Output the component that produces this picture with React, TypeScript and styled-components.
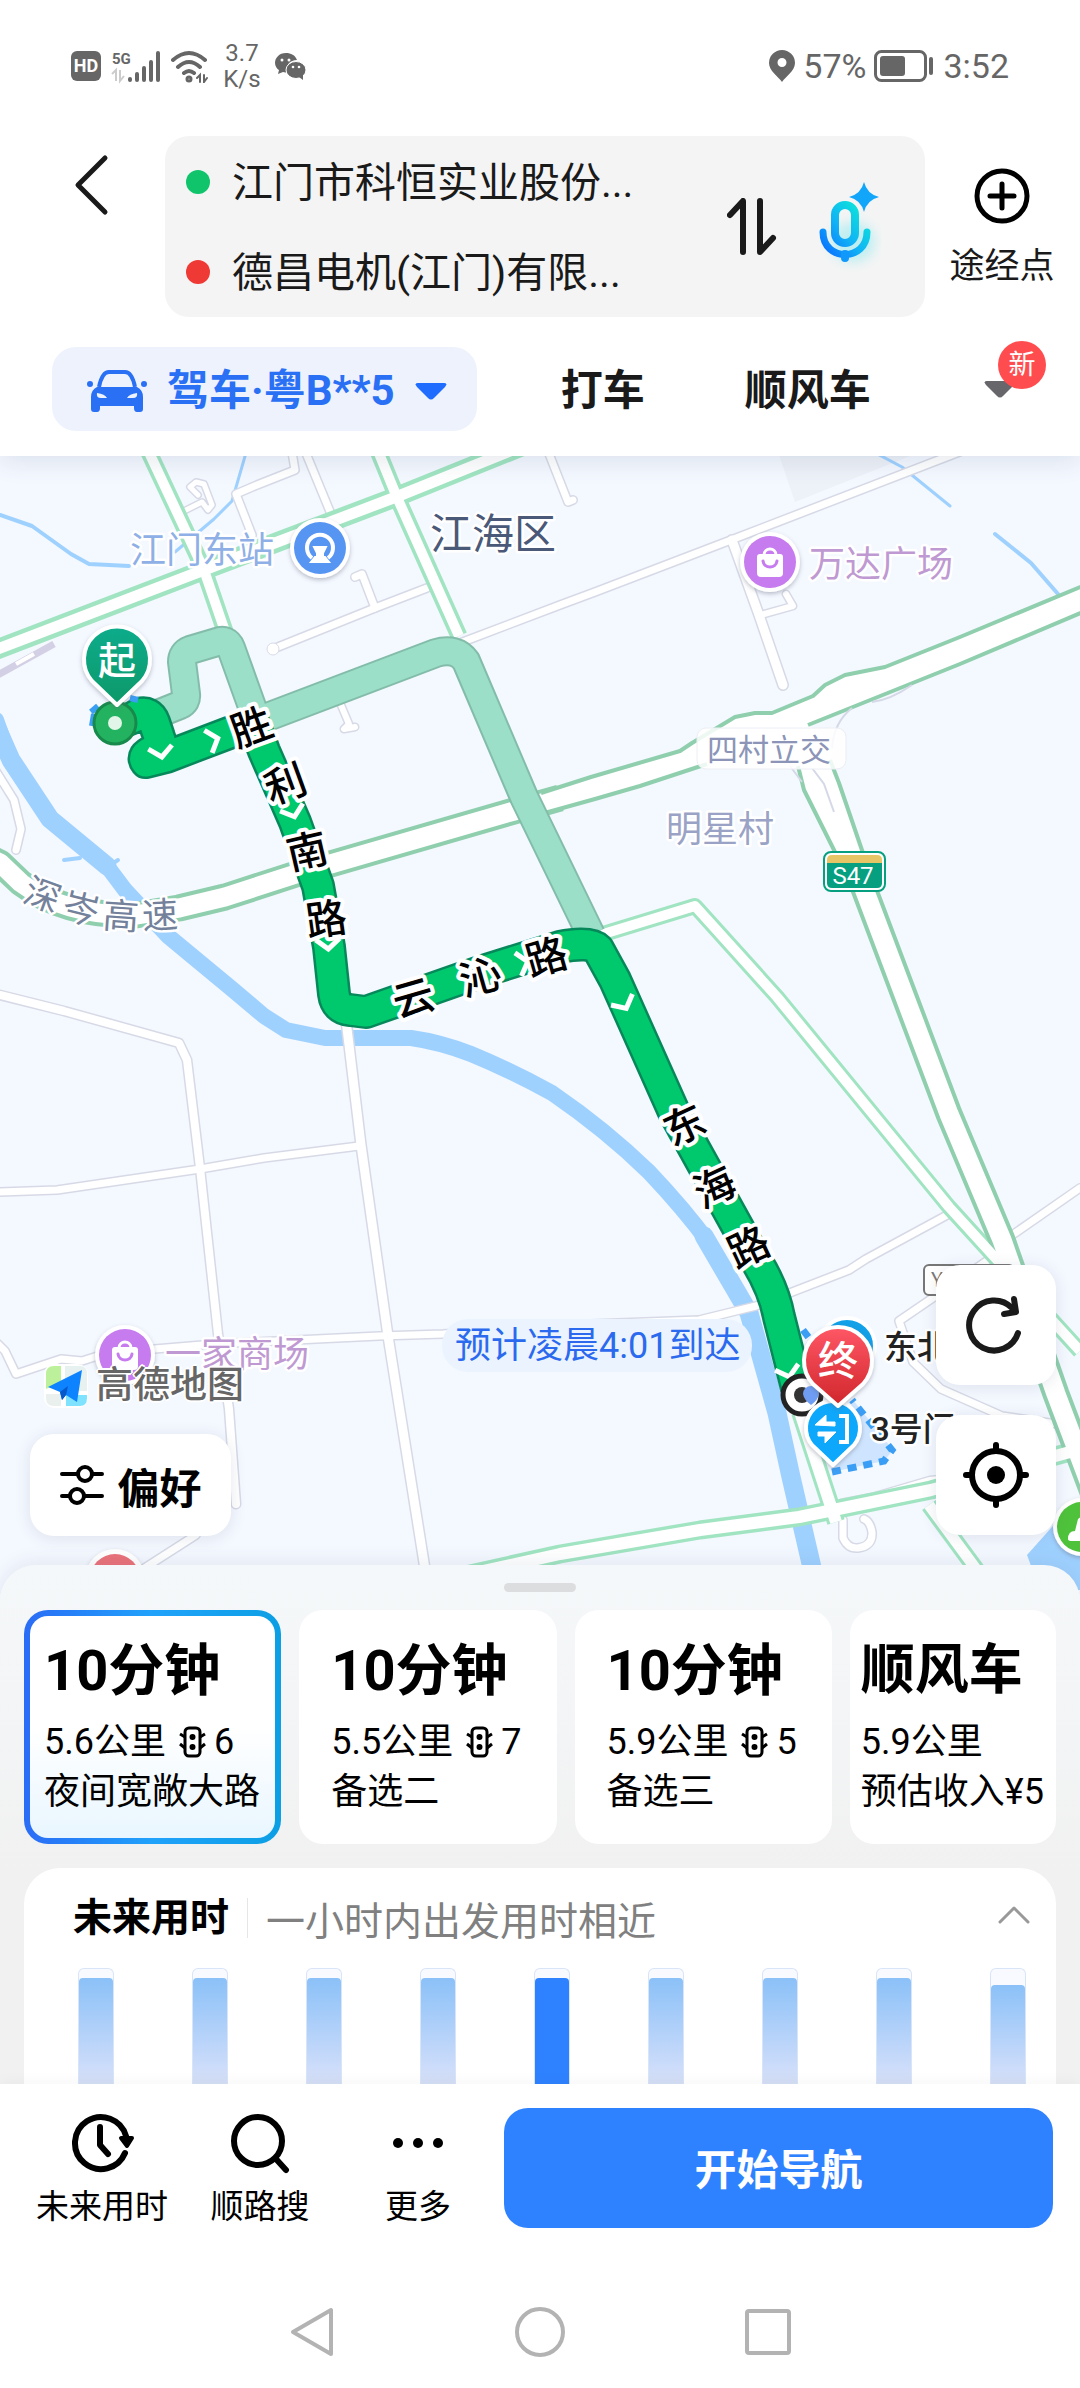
import React from "react";
import styled, { createGlobalStyle, css } from "styled-components";

const Global = createGlobalStyle`
  *, *::before, *::after { box-sizing: border-box; }
  body { margin: 0; background: #fff; }
  body, button {
    font-family: Roboto, "Noto Sans CJK SC", sans-serif;
    color: #1a1a1a;
  }
  button { border: 0; padding: 0; background: none; cursor: pointer; text-align: left; }
  svg { display: block; flex: none; }
`;

const Page = styled.div`
  min-height: 100vh;
  display: flex;
  flex-direction: column;
`;

const Header = styled.header`
  position: relative;
  z-index: 2;
  display: flex;
  flex-direction: column;
  background: #fff;
  box-shadow: 0 4px 24px rgba(60, 80, 110, 0.14);
  padding-bottom: 25px;
`;

/* ---------- status bar ---------- */

const StatusBar = styled.div`
  display: flex;
  align-items: center;
  justify-content: space-between;
  height: 132px;
  padding: 0 71px;
  color: #666;
`;

const StatusGroup = styled.div<{ $gap: number }>`
  display: flex;
  align-items: center;
  gap: ${(p) => p.$gap}px;
  font-size: 34px;
  line-height: 40px;
`;

const HdBadge = styled.span`
  width: 30px;
  border-radius: 6px;
  background: #666;
  color: #fff;
  font-size: 18px;
  line-height: 30px;
  font-weight: 700;
  text-align: center;
`;

const NetSpeed = styled.span`
  width: 46px;
  font-size: 24px;
  line-height: 26px;
  text-align: center;
`;

/* ---------- route header ---------- */

const SearchRow = styled.div`
  display: flex;
  align-items: flex-start;
  gap: 16px;
  padding: 4px 20px 0 62px;
`;

const BackButton = styled.button`
  width: 87px;
  padding: 18px 0 0 11px;
`;

const RouteBox = styled.div`
  flex: 1;
  display: flex;
  align-items: center;
  justify-content: space-between;
  min-width: 0;
  padding: 1px 44px 0 21px;
  border-radius: 24px;
  background: #f4f4f4;
`;

const RouteFields = styled.div`
  display: flex;
  flex-direction: column;
`;

const RouteField = styled.button`
  display: flex;
  align-items: center;
  gap: 22px;
  height: 90px;
  white-space: nowrap;
`;

const RouteName = styled.span`
  padding-top: 2px;
  font-size: 41px;
  line-height: 60px;
`;

const Dot = styled.span<{ $color: string }>`
  width: 24px;
  height: 24px;
  border-radius: 50%;
  background: ${(p) => p.$color};
`;

const RouteTools = styled.div`
  display: flex;
  align-items: center;
  gap: 40px;
`;

const ViaButton = styled.button`
  display: flex;
  flex-direction: column;
  align-items: center;
  gap: 16px;
  width: 116px;
  margin-left: 3px;
  padding-top: 32px;
  font-size: 35px;
  line-height: 54px;
`;

const ModeRow = styled.nav`
  display: flex;
  align-items: center;
  height: 84px;
  margin-top: 30px;
  padding: 0 52px;
`;

const ModeButton = styled.button<{ $active?: boolean }>`
  display: flex;
  align-items: center;
  gap: 20px;
  padding-top: 4px;
  font-size: 42px;
  line-height: 80px;
  font-weight: 700;
  white-space: nowrap;
  ${(p) =>
    p.$active &&
    css`
      padding-right: 30px;
      padding-left: 35px;
      border-radius: 24px;
      background: #edf2fd;
      color: #2a70f4;
    `}
`;

const ModeGroup = styled.div`
  flex: 1;
  display: flex;
  justify-content: space-between;
  align-items: center;
  padding-left: 84px;
`;

const Modes = styled.div`
  display: flex;
  gap: 100px;
`;

const MoreModes = styled.button`
  position: relative;
  width: 44px;
  height: 60px;
  display: flex;
  align-items: center;
`;

const NewBadge = styled.span`
  position: absolute;
  left: 14px;
  top: -18px;
  width: 48px;
  height: 48px;
  border-radius: 50%;
  background: #ff4d4f;
  color: #fff;
  font-size: 27px;
  line-height: 48px;
  text-align: center;
`;

/* ---------- map ---------- */

const MapArea = styled.main`
  position: relative;
  flex: 1;
  min-height: 700px;
  overflow: hidden;
  background: #f4f8ff;
`;

const MapCanvas = styled.svg`
  position: absolute;
  inset: 0;
  width: 100%;
  height: 100%;
  font-family: Roboto, "Noto Sans CJK SC", sans-serif;
`;

const floating = css`
  display: flex;
  align-items: center;
  justify-content: center;
  border-radius: 24px;
  background: #fff;
  box-shadow: 0 2px 16px rgba(60, 80, 110, 0.13);
`;

const MapControls = styled.div`
  position: absolute;
  right: 24px;
  bottom: 66px;
  display: flex;
  flex-direction: column;
  gap: 30px;
`;

const MapButton = styled.button`
  ${floating}
  width: 120px;
  height: 120px;
`;

const PreferButton = styled.button`
  ${floating}
  position: absolute;
  left: 30px;
  bottom: 65px;
  gap: 12px;
  width: 201px;
  height: 102px;
  font-size: 42px;
  font-weight: 700;
  color: #000;
`;

const Attribution = styled.div`
  position: absolute;
  left: 44px;
  bottom: 188px;
  display: flex;
  align-items: center;
  gap: 8px;
  color: #666;
  font-size: 37px;
  line-height: 54px;
  font-weight: 500;
  text-shadow: 2px 0 #fff, -2px 0 #fff, 0 2px #fff, 0 -2px #fff, 1px 1px #fff, -1px -1px #fff;
`;

/* ---------- bottom sheet ---------- */

const Sheet = styled.section`
  position: relative;
  z-index: 1;
  margin-top: -36px;
  padding: 18px 24px 0;
  border-radius: 36px 36px 0 0;
  background: linear-gradient(#f5f8fa, #f1f1f1 60%);
  box-shadow: 0 -2px 20px rgba(60, 80, 110, 0.1);
`;

const Handle = styled.div`
  width: 72px;
  height: 9px;
  margin: 0 auto 18px;
  border-radius: 5px;
  background: #dcdddf;
`;

const RouteCards = styled.div`
  display: grid;
  grid-template-columns: 257fr 257fr 257fr 206fr;
  gap: 18px;
`;

const RouteCard = styled.button<{ $selected?: boolean; $inset: number }>`
  display: flex;
  flex-direction: column;
  min-width: 0;
  height: 234px;
  padding: 9px 0 0 ${(p) => p.$inset}px;
  border: 6px solid transparent;
  border-radius: 24px;
  background: ${(p) =>
    p.$selected
      ? "linear-gradient(#fff 50%, #e9f6ff) padding-box, linear-gradient(90deg, #2a6cf6, #20a2fb 50%, #0c9fe4) border-box"
      : "#fff"};
  color: #000;
  white-space: nowrap;
`;

const CardTitle = styled.div<{ $small: boolean }>`
  font-size: ${(p) => (p.$small ? 54 : 56)}px;
  line-height: 92px;
  font-weight: 700;
`;

const CardLine = styled.div`
  display: flex;
  align-items: center;
  font-size: 36px;
  line-height: 50px;
`;

const Lights = styled.span`
  display: flex;
  align-items: center;
  gap: 8px;
  margin-left: 13px;
`;

const FutureCard = styled.section`
  height: 216px;
  margin-top: 24px;
  border-radius: 36px 36px 0 0;
  background: #fff;
  overflow: hidden;
`;

const FutureHead = styled.div`
  display: flex;
  align-items: center;
  height: 100px;
  padding: 0 26px 0 49px;
  font-size: 39px;
`;

const FutureTitle = styled.h2`
  margin: 0;
  padding-right: 18px;
  border-right: 1px solid #e6e6e6;
  font-size: 39px;
  line-height: 40px;
  font-weight: 700;
  color: #000;
`;

const FutureNote = styled.span`
  flex: 1;
  padding-left: 18px;
  color: #808080;
`;

const Bars = styled.div`
  display: flex;
  justify-content: space-between;
  height: 116px;
  padding: 0 30px 0 54px;
`;

const BarTrack = styled.div`
  display: flex;
  align-items: flex-end;
  width: 36px;
  border: solid #d8e4f8;
  border-width: 1px 1px 0;
  border-radius: 6px 6px 0 0;
  background: #f8faff;
`;

const BarFill = styled.div<{ $active: boolean }>`
  width: 100%;
  border-radius: 4px 4px 0 0;
  background: ${(p) => (p.$active ? "#2f82ff" : "linear-gradient(#8bc1f8, #cddcfa 85%, #d5dff5)")};
`;

/* ---------- footer ---------- */

const Footer = styled.footer`
  position: relative;
  z-index: 2;
  background: #fff;
  box-shadow: 0 -2px 14px rgba(0, 0, 0, 0.04);
`;

const ActionRow = styled.div`
  display: flex;
  align-items: center;
  padding: 24px 27px 0 23px;
`;

const ActionButton = styled.button`
  display: flex;
  flex-direction: column;
  align-items: center;
  gap: 8px;
  width: 158px;
  height: 120px;
  padding-top: 5px;
  font-size: 33px;
  line-height: 48px;
  color: #000;
`;

const StartButton = styled.button`
  flex: 1;
  height: 120px;
  margin-left: 7px;
  padding-bottom: 4px;
  border-radius: 24px;
  background: #2f82ff;
  color: #fff;
  font-size: 42px;
  font-weight: 700;
  text-align: center;
`;

const SystemNav = styled.nav`
  display: flex;
  justify-content: center;
  align-items: center;
  gap: 172px;
  height: 160px;
  padding: 48px 0 0;
`;

const SystemButton = styled.button`
  display: flex;
  justify-content: center;
  width: 56px;
`;

/* ---------- data ---------- */

const routes = [
  { title: "10分钟", distance: "5.6公里", lights: 6, note: "夜间宽敞大路", inset: 14 },
  { title: "10分钟", distance: "5.5公里", lights: 7, note: "备选二", inset: 26 },
  { title: "10分钟", distance: "5.9公里", lights: 5, note: "备选三", inset: 26 },
  { title: "顺风车", distance: "5.9公里", lights: 0, note: "预估收入¥5", inset: 5 },
];

const durations = [106, 106, 106, 106, 106, 106, 106, 106, 99];
const currentSlot = 4;

const localRoads: [string, number][] = [
  ["M291 446L295 470L257 485L236 494L252 535", 9],
  ["M303 446L331 514", 9],
  ["M184 511L202 502L208 510L212 505L204 484L196 482L190 487L198 495", 7],
  ["M427 588L375 608L273 649", 9],
  ["M375 608L362 574L355 577", 9],
  ["M460 643L560 605L595 592L731 540L949 456L980 444", 9],
  ["M546 446L568 502L573 500", 9],
  ["M732 540L759 615L783 685", 11],
  ["M761 615L793 606L786 594", 8],
  ["M338 698L349 724L344 729L355 727", 8],
  ["M-6 768L14 800L21 829L16 850", 9],
  ["M0 995L64 1011L179 1043L187 1060L200 1168L218 1334L229 1409L236 1504", 10],
  ["M0 1192L57 1190L200 1169L264 1158L359 1146", 9],
  ["M346 1020L361 1145L388 1336L425 1569L432 1610", 11],
  ["M-4 1342L5 1351L16 1374L61 1359L82 1361L107 1353L214 1344L379 1336L443 1334L591 1324L699 1320L756 1306L849 1270L866 1259L949 1214", 9],
  ["M995 1247L1080 1188", 9],
  ["M1000 1252L899 1321L913 1362L941 1389L1002 1416L1070 1426", 9],
  ["M196 1535L143 1569", 9],
  ["M843 1520V1538Q848 1549 858 1548Q873 1546 872 1532Q870 1521 864 1519", 9],
  ["M841 1503L872 1497L930 1480L950 1478", 8],
];

const greenRoads: [string, number, number][] = [
  ["M-10 652L204 570L396 497L530 443", 20, 11],
  ["M146 446L204 570L228 640", 17, 10],
  ["M376 446L396 495L459 636", 17, 10],
  ["M600 935L695 906L777 997L949 1207L1080 1351", 16, 10],
  ["M800 1412L836 1522", 18, 12],
  ["M380 1593L443 1580L560 1554L700 1530L799 1517L931 1490L1070 1452", 19, 12],
  ["M929 1505L976 1569L1006 1612", 17, 11],
];

const expressways = [
  "M-10 858L0 863L21 883Q65 916 136 915L179 908L225 897L296 874L514 811L560 798",
  "M854 858L863 886L906 1000L949 1114L1002 1240L1056 1394L1096 1500",
];

const roadNames: [string, number, number, number][] = [
  ["胜", 251, 726, -20], ["利", 285, 783, -20], ["南", 307, 850, -13], ["路", 326, 918, -8],
  ["云", 413, 997, -16], ["沁", 480, 976, -16], ["路", 546, 956, -16],
  ["东", 684, 1124, -25], ["海", 714, 1186, -25], ["路", 748, 1246, -25],
];

const expresswayName: [string, number, number, number][] = [
  ["深", 43, 894, 20], ["岑", 81, 908, 14], ["高", 121, 915, 4], ["速", 160, 914, -3],
];

const mapLabels: [string, number, number, number, string, number][] = [
  ["江门东站", 130, 563, 36, "#8fb0e6", 400],
  ["江海区", 430, 549, 42, "#4b5979", 400],
  ["万达广场", 809, 577, 36, "#bf9ad2", 400],
  ["明星村", 666, 842, 36, "#9aa3c6", 400],
  ["一家商场", 165, 1367, 36, "#bf9ad2", 400],
  ["东北门", 884, 1359, 33, "#222", 500],
  ["3号门", 871, 1441, 33, "#222", 500],
];

const chevrons: [number, number, number][] = [
  [213, 740, -19], [161, 752, 80], [293, 812, 72], [328, 944, 86], [523, 963, -16], [624, 1004, 63], [788, 1372, 75],
];

/* ---------- map drawing ---------- */

function RotatedGlyphs({ items, size, fill, halo, weight }: {
  items: [string, number, number, number][]; size: number; fill: string; halo: number; weight: number;
}) {
  return (
    <g fontSize={size} fill={fill} stroke="#fff" strokeWidth={halo} strokeLinejoin="round" paintOrder="stroke" textAnchor="middle" fontWeight={weight}>
      {items.map(([ch, x, y, r]) => (
        <text key={`${ch}${x}`} transform={`translate(${x} ${y}) rotate(${r})`} y={Math.round(size * 0.38)}>{ch}</text>
      ))}
    </g>
  );
}

function MallMarker({ x, y }: { x: number; y: number }) {
  return (
    <g transform={`translate(${x} ${y})`}>
      <circle r="30" fill="#fff" filter="url(#soft)" />
      <circle r="26" fill="#c67bee" />
      <path d="M-13 -5Q-13 -8 -10 -8H10Q13 -8 13 -5V11Q13 15 9 15H-9Q-13 15 -13 11Z" fill="#fff" />
      <path d="M-6 -7C-6 -15 6 -15 6 -7" fill="none" stroke="#fff" strokeWidth="3" />
      <path d="M-7 -1C-6 7 6 7 7 -1" fill="none" stroke="#c67bee" strokeWidth="3" strokeLinecap="round" />
    </g>
  );
}

function RouteMap() {
  const main =
    "M114 722Q128 722 139 714Q150 711 154 722L159 737Q164 748 153 751Q141 756 146 762L166 757L229 733L254 724L264 751L295 822L318 886L329 947L334 994Q336 1009 350 1010L366 1012L480 972L560 947Q590 941 598 949L615 980L674 1112L757 1262Q774 1290 779 1317L797 1388";
  const alt =
    "M150 717L180 705Q187 702 186 694L182 662Q182 653 190 650L217 642Q227 638 231 648L255 715M262 719L436 653Q456 647 466 661L524 797L591 935";
  return (
    <MapCanvas viewBox="0 456 1080 1145" preserveAspectRatio="xMidYMid slice" role="img" aria-label="路线地图">
      <defs>
        <filter id="soft" x="-30%" y="-30%" width="160%" height="160%">
          <feDropShadow dx="0" dy="2" stdDeviation="2" floodColor="#5b6478" floodOpacity="0.4" />
        </filter>
        <linearGradient id="startFill" x1="0" y1="0" x2="0" y2="1">
          <stop offset="0" stopColor="#0aac8c" /><stop offset="1" stopColor="#079868" />
        </linearGradient>
        <linearGradient id="endFill" x1="0" y1="0" x2="0" y2="1">
          <stop offset="0" stopColor="#ff5766" /><stop offset="1" stopColor="#d0262b" />
        </linearGradient>
      </defs>
      <path d="M776 446L795 502L935 446Z" fill="#edf1f8" />

      <g fill="none" stroke="#9fd1ff" strokeLinejoin="round" strokeLinecap="round">
        <path d="M-4 720L11 762L50 819L107 866L125 890L168 936L232 989L264 1016L286 1030L325 1038L411 1038Q440 1042 471 1054Q510 1070 552 1093Q606 1130 649 1172Q685 1210 709 1243L749 1313" strokeWidth="16" />
        <path d="M-4 726L11 760L50 819L107 866" strokeWidth="19" />
        <path d="M704 1236L749 1313L777 1413L791 1477L813 1572L820 1610" strokeWidth="19" />
        <path d="M64 860L80 858M112 864L118 860" strokeWidth="4" />
        <path d="M0 515L32 526L71 554L89 564L129 566" strokeWidth="4" />
        <path d="M248 446L232 501L214 519L175 552" strokeWidth="3" />
        <path d="M870 450L902 467L950 506" strokeWidth="3" />
        <path d="M995 534L1031 563L1058 594" strokeWidth="4" />
      </g>
      <path d="M1027 1555L1060 1518L1090 1530V1590H1040Z" fill="#9fd1ff" />

      <path d="M-4 676L54 644" stroke="#d3cfe4" strokeWidth="7" />
      <path d="M16 664L34 654" stroke="#fff" strokeWidth="4" />

      <g fill="none" strokeLinejoin="round" strokeLinecap="round">
        {localRoads.map(([d, w]) => <path key={d} d={d} stroke="#d7dae6" strokeWidth={w + 1} />)}
        {localRoads.map(([d, w]) => <path key={d} d={d} stroke="#fff" strokeWidth={w - 2} />)}
      </g>
      <circle cx="273" cy="649" r="6" fill="#fff" stroke="#d9dce8" />
      <g fill="none" strokeLinejoin="round">
        {greenRoads.map(([d, w]) => <path key={d} d={d} stroke="#a0e4c1" strokeWidth={w} />)}
        {expressways.map((d) => <path key={d} d={d} stroke="#8fcfae" strokeWidth="27" />)}
        {greenRoads.map(([d, , w]) => <path key={d} d={d} stroke="#fff" strokeWidth={w} />)}
        {expressways.map((d) => <path key={d} d={d} stroke="#fff" strokeWidth="19" />)}
      </g>
      <path d="M541 793L591 777L680 751L692 743L735 717L755 713L772 713L813 696L825 685L845 675L885 667L960 637L1090 583V610L960 666L808 725Q838 742 830 760L839 783L862 860L840 864L804 791L798 765L785 740L707 764L640 786L595 798L541 812Z" fill="#fff" />
      <g fill="none" stroke="#8fcfae" strokeWidth="4" strokeLinejoin="round">
        <path d="M541 793L591 777L680 751L692 743L735 717L755 713L772 713L813 696L825 685L845 675L885 667L960 637L1090 583" />
        <path d="M1090 609L960 664L808 725M541 814L595 799L640 786L707 764" />
        <path d="M798 766L804 790L842 866M830 760L839 783L864 856" />
      </g>
      <path d="M852 708Q834 722 832 748M912 685Q890 700 872 702M812 768L824 784L834 812M790 766L802 782" fill="none" stroke="#d5d8e6" strokeWidth="2" />

      <g fill="none" strokeLinejoin="round">
        <path d={alt} stroke="#83bda9" strokeWidth="30" />
        <path d={alt} stroke="#9bdfc8" strokeWidth="26" />
        <path d={main} stroke="#06885a" strokeWidth="34" />
        <path d={main} stroke="#00c96d" strokeWidth="29" />
      </g>
      <g fill="none" stroke="#fff" strokeWidth="5">
        {chevrons.map(([x, y, r]) => (
          <path key={x} d="M-5 -12L5 0L-5 12" transform={`translate(${x} ${y}) rotate(${r})`} />
        ))}
      </g>

      <rect x="697" y="728" width="149" height="41" rx="9" fill="#fff" fillOpacity="0.85" stroke="#eceef4" />
      <text x="707" y="761" fontSize="31" fill="#8c95b8">四村立交</text>

      <path d="M832 1472L884 1461L893 1450L853 1400Z" fill="#cfe5ff" />
      <path d="M832 1472L884 1461L892 1450L852 1400M803 1330L812 1342" fill="none" stroke="#3b9ef5" strokeWidth="7" strokeDasharray="9 7" />
      <path d="M91 712L98 706M92 726L94 714M130 698L138 700" stroke="#3b9ef5" strokeWidth="6" />

      <MallMarker x={125} y={1355} />
      {mapLabels.map(([text, x, y, size, fill, weight]) => (
        <text key={text} x={x} y={y} fontSize={size} fill={fill} fontWeight={weight}
          stroke="#fff" strokeWidth="5" strokeLinejoin="round" paintOrder="stroke">{text}</text>
      ))}
      <RotatedGlyphs items={expresswayName} size={36} fill="#74819b" halo={5} weight={400} />
      <RotatedGlyphs items={roadNames} size={41} fill="#000" halo={8} weight={500} />

      <g transform="translate(320 548)">
        <circle r="30" fill="#fff" filter="url(#soft)" />
        <circle r="26" fill="#5795f3" />
        <path d="M-8 10A13 13 0 1 1 8 10" fill="none" stroke="#fff" strokeWidth="4" />
        <path d="M-2 -14H2M-6 -1H6L3 5V9H-3V5ZM-9 14H9L5 9H-5Z" fill="#fff" stroke="#fff" strokeWidth="2" />
      </g>
      <MallMarker x={770} y={562} />

      <g>
        <rect x="824" y="852" width="61" height="39" rx="7" fill="#fff" stroke="#06a080" strokeWidth="2" />
        <path d="M827 863V860Q827 855 832 855H877Q882 855 882 860V863Z" fill="#e5c565" />
        <path d="M827 863H882V883Q882 888 877 888H832Q827 888 827 883Z" fill="#06a080" />
        <text x="853" y="884" fontSize="24" fill="#fff" textAnchor="middle">S47</text>
      </g>
      <g>
        <rect x="924" y="1265" width="90" height="30" rx="5" fill="#fff" stroke="#777" strokeWidth="2" />
        <text x="931" y="1287" fontSize="20" fill="#777">Y</text>
      </g>

      <rect x="442" y="1319" width="310" height="53" rx="26" fill="#ebf4fe" />
      <text x="455" y="1358" fontSize="36" fill="#2b6aee">预计凌晨4:01到达</text>

      <circle cx="802" cy="1395" r="19" fill="#fff" stroke="#222" strokeWidth="5" />
      <circle cx="802" cy="1395" r="8" fill="#333" />
      <path d="M803 1394A8 8 0 1 1 819 1394Q818 1400 811 1405Q804 1400 803 1394Z" fill="#6f9df3" />

      <circle cx="847" cy="1346" r="28" fill="#12a0e8" stroke="#fff" strokeWidth="4" />
      <path d="M833 1465L812 1445A27 27 0 1 1 854 1445Z" fill="#08a7fb" stroke="#fff" strokeWidth="4" strokeLinejoin="round" filter="url(#soft)" />
      <path d="M815 1425L826 1415V1422H835V1426ZM836 1432H818V1436H825V1443Z" fill="#fff" stroke="#fff" strokeWidth="1" />
      <path d="M839 1416H847V1442H839" fill="none" stroke="#fff" strokeWidth="4" />
      <path d="M838 1406L813 1384A34 34 0 1 1 863 1384Z" fill="url(#endFill)" stroke="#fff" strokeWidth="4" strokeLinejoin="round" filter="url(#soft)" />
      <text x="838" y="1375" fontSize="40" fill="#fff" textAnchor="middle" fontWeight="500">终</text>

      <circle cx="115" cy="723" r="21" fill="#23b25f" stroke="#178a4b" strokeWidth="3" />
      <circle cx="115" cy="723" r="7" fill="#e1f6e8" />
      <path d="M117 705L92 681A33 33 0 1 1 142 681Z" fill="url(#startFill)" stroke="#fff" strokeWidth="4" strokeLinejoin="round" filter="url(#soft)" />
      <text x="117" y="674" fontSize="38" fill="#fff" textAnchor="middle" fontWeight="500">起</text>

      <g transform="translate(1082 1527)">
        <circle r="29" fill="#fff" filter="url(#soft)" />
        <circle r="25" fill="#4fc23b" />
        <path d="M-14 12Q-14 4 -7 4L-4 -8L4 -14V14H-10Q-14 14 -14 12Z" fill="#fff" />
      </g>
      <circle cx="115" cy="1579" r="30" fill="#fff" filter="url(#soft)" />
      <circle cx="115" cy="1579" r="25" fill="#ea727a" />
    </MapCanvas>
  );
}

/* ---------- icons ---------- */

const TrafficLight = () => (
  <svg width="27" height="32" viewBox="0 0 27 32" fill="none" stroke="#000" strokeWidth="3">
    <rect x="6" y="2" width="15" height="28" rx="4" />
    <path d="M1 8L6 11M26 8L21 11M1 18L6 22M26 18L21 22" />
    <circle cx="13.5" cy="11" r="1.5" /><circle cx="13.5" cy="21" r="1.5" />
  </svg>
);

const Caret = ({ color }: { color: string }) => (
  <svg width="32" height="18" viewBox="0 0 32 18">
    <path d="M3 1H29Q33 1 30 5L19 16Q16 19 13 16L2 5Q-1 1 3 1Z" fill={color} />
  </svg>
);

export default function App() {
  return (
    <Page>
      <Global />
      <Header>
        <StatusBar>
          <StatusGroup $gap={10}>
            <HdBadge>HD</HdBadge>
            <svg width="50" height="38" viewBox="0 0 50 38">
              <text x="1" y="17" fontSize="15" fontWeight="700" fill="#666" fontFamily="Roboto, sans-serif">5G</text>
              <path d="M1 27L5 23V34M9 23V34L13 29" stroke="#ccc" strokeWidth="2" fill="none" />
              <path d="M19 32V33M26 27V33M33 21V33M40 15V33M47 6V33" stroke="#666" strokeWidth="4" strokeLinecap="round" />
            </svg>
            <svg width="38" height="34" viewBox="0 0 38 34" fill="none" stroke="#666" strokeWidth="4" strokeLinecap="round">
              <path d="M2 11Q18 -3 34 11M7 18Q18 8 29 18M13 24Q18 20 23 24" />
              <circle cx="18" cy="30" r="1.5" />
              <path d="M26 29L29 26V33M33 26V33L36 29" strokeWidth="2" />
            </svg>
            <NetSpeed>3.7 K/s</NetSpeed>
            <svg width="31" height="27" viewBox="0 0 31 27">
              <path d="M11 0C4 0 0 5 0 10C0 13 2 16 4 17L3 21L8 19L13 20C10 12 15 7 22 7C20 2 16 0 11 0Z" fill="#666" />
              <ellipse cx="21" cy="17" rx="10" ry="8.5" fill="#666" stroke="#fff" strokeWidth="1" />
              <path d="M24 24L28 27L28 21Z" fill="#666" />
              <g fill="#fff"><circle cx="7" cy="7" r="1.5" /><circle cx="14" cy="7" r="1.5" /><circle cx="18" cy="14" r="1.3" /><circle cx="24" cy="14" r="1.3" /></g>
            </svg>
          </StatusGroup>
          <StatusGroup $gap={8}>
            <svg width="26" height="32" viewBox="0 0 26 32">
              <path d="M13 0A13 13 0 0 0 0 13C0 21 9 26 13 32C17 26 26 21 26 13A13 13 0 0 0 13 0ZM13 8A4.5 4.5 0 1 1 13 17A4.5 4.5 0 1 1 13 8Z" fill="#666" fillRule="evenodd" />
            </svg>
            57%
            <svg width="61" height="32" viewBox="0 0 61 32">
              <rect x="1.5" y="1.5" width="50" height="29" rx="6" fill="none" stroke="#666" strokeWidth="3" />
              <rect x="6" y="6" width="25" height="20" rx="3" fill="#666" />
              <path d="M57 9V23" stroke="#666" strokeWidth="4" strokeLinecap="round" />
            </svg>
            3:52
          </StatusGroup>
        </StatusBar>

        <SearchRow>
          <BackButton aria-label="返回">
            <svg width="36" height="62" viewBox="0 0 36 62" fill="none" stroke="#1a1a1a" strokeWidth="5" strokeLinecap="round" strokeLinejoin="round">
              <path d="M32 4L5 31L32 58" />
            </svg>
          </BackButton>
          <RouteBox>
            <RouteFields>
              <RouteField><Dot $color="#0fc46b" /><RouteName>江门市科恒实业股份...</RouteName></RouteField>
              <RouteField><Dot $color="#ef3935" /><RouteName>德昌电机(江门)有限...</RouteName></RouteField>
            </RouteFields>
            <RouteTools>
              <button aria-label="交换起终点">
                <svg width="50" height="58" viewBox="0 0 50 58" fill="none" stroke="#1a1a1a" strokeWidth="6" strokeLinecap="round" strokeLinejoin="round">
                  <path d="M3 17L16 3V54M33 3V54L46 40" />
                </svg>
              </button>
              <button aria-label="语音">
                <svg width="64" height="90" viewBox="0 0 64 90" fill="none">
                  <defs>
                    <linearGradient id="mic" gradientUnits="userSpaceOnUse" x1="4" y1="70" x2="50" y2="30">
                      <stop offset="0" stopColor="#0a6cff" /><stop offset="0.5" stopColor="#10b4f5" /><stop offset="1" stopColor="#0de6d8" />
                    </linearGradient>
                    <filter id="glow" x="-50%" y="-50%" width="200%" height="200%"><feGaussianBlur stdDeviation="6" /></filter>
                  </defs>
                  <ellipse cx="36" cy="60" rx="22" ry="20" fill="#7ee7ee" opacity="0.45" filter="url(#glow)" />
                  <rect x="18" y="23" width="20" height="38" rx="10" stroke="url(#mic)" strokeWidth="8" />
                  <path d="M6 50C6 80 50 80 50 50" stroke="url(#mic)" strokeWidth="7" strokeLinecap="round" />
                  <path d="M28 72V76" stroke="#1098fa" strokeWidth="8" strokeLinecap="round" />
                  <path d="M47 0Q50 12 62 15Q50 18 47 30Q44 18 32 15Q44 12 47 0Z" fill="#12a6fb" />
                </svg>
              </button>
            </RouteTools>
          </RouteBox>
          <ViaButton>
            <svg width="56" height="56" viewBox="0 0 56 56" fill="none" stroke="#000" strokeWidth="5" strokeLinecap="round">
              <circle cx="28" cy="28" r="25" /><path d="M16 28H40M28 16V40" />
            </svg>
            途经点
          </ViaButton>
        </SearchRow>

        <ModeRow>
          <ModeButton $active>
            <svg width="60" height="42" viewBox="0 0 60 42" fill="#2a70f4">
              <path d="M12 17C14 7 17 2 22 2H38C43 2 46 7 48 17" fill="none" stroke="#2a70f4" strokeWidth="4" />
              <circle cx="3" cy="14" r="3" /><circle cx="57" cy="14" r="3" />
              <path fillRule="evenodd" d="M10 17H50Q56 20 56 27V39Q56 42 53 42H50Q47 42 47 38V36H13V38Q13 42 10 42H7Q4 42 4 39V27Q4 20 10 17ZM10 23Q9 28 14 28H20Q18 24 10 23ZM50 23Q42 24 40 28H46Q51 28 50 23Z" />
            </svg>
            驾车·粤B**5
            <Caret color="#1f6cff" />
          </ModeButton>
          <ModeGroup>
            <Modes>
              <ModeButton>打车</ModeButton>
              <ModeButton>顺风车</ModeButton>
            </Modes>
            <MoreModes aria-label="更多方式">
              <Caret color="#66666b" />
              <NewBadge>新</NewBadge>
            </MoreModes>
          </ModeGroup>
        </ModeRow>
      </Header>

      <MapArea>
        <RouteMap />
        <Attribution>
          <svg width="44" height="44" viewBox="0 0 44 44">
            <rect width="44" height="44" rx="10" fill="#fff" />
            <path d="M2 25V10Q2 2 10 2H17V18Z" fill="#bdf09a" />
            <path d="M21 2H36Q43 2 43 10V27H21Z" fill="#e6f1f0" />
            <path d="M2 30H17V42H10Q2 42 2 34Z" fill="#e9f0ee" />
            <path d="M22 31H43V34Q43 42 36 42H22Z" fill="#7fe2ff" />
            <path d="M38 6L4 23L16 28L18 36L22 31L33 38Z" fill="#0d83ff" />
            <path d="M24 22L16 28L18 36L22 31Z" fill="#0758c8" />
          </svg>
          高德地图
        </Attribution>
        <PreferButton>
          <svg width="46" height="42" viewBox="0 0 46 42" fill="none" stroke="#000" strokeWidth="4" strokeLinecap="round">
            <path d="M3 10H18M34 10H43M3 32H10M26 32H43" />
            <circle cx="26" cy="10" r="7" /><circle cx="18" cy="32" r="7" />
          </svg>
          偏好
        </PreferButton>
        <MapControls>
          <MapButton aria-label="刷新">
            <svg width="60" height="60" viewBox="0 0 60 60" fill="none" stroke="#1a1a1a" strokeWidth="6" strokeLinecap="round" strokeLinejoin="round">
              <path d="M52 38A25 25 0 1 1 46 13M48 4L50 17L38 19" />
            </svg>
          </MapButton>
          <MapButton aria-label="定位">
            <svg width="68" height="68" viewBox="0 0 68 68" fill="none" stroke="#000" strokeWidth="6" strokeLinecap="round">
              <circle cx="34" cy="34" r="24" /><circle cx="34" cy="34" r="9" fill="#000" stroke="none" />
              <path d="M34 4V10M34 58V64M4 34H10M58 34H64" />
            </svg>
          </MapButton>
        </MapControls>
      </MapArea>

      <Sheet>
        <Handle />
        <RouteCards>
          {routes.map((r, i) => (
            <RouteCard key={i} $selected={i === 0} $inset={r.inset}>
              <CardTitle $small={r.lights === 0}>{r.title}</CardTitle>
              <CardLine>
                {r.distance}
                {r.lights > 0 && <Lights><TrafficLight />{r.lights}</Lights>}
              </CardLine>
              <CardLine>{r.note}</CardLine>
            </RouteCard>
          ))}
        </RouteCards>
        <FutureCard>
          <FutureHead>
            <FutureTitle>未来用时</FutureTitle>
            <FutureNote>一小时内出发用时相近</FutureNote>
            <button aria-label="展开">
              <svg width="32" height="24" viewBox="0 0 32 24" fill="none" stroke="#999" strokeWidth="3" strokeLinecap="round" strokeLinejoin="round">
                <path d="M2 16L16 2L30 16" />
              </svg>
            </button>
          </FutureHead>
          <Bars>
            {durations.map((h, i) => (
              <BarTrack key={i}><BarFill $active={i === currentSlot} style={{ height: h }} /></BarTrack>
            ))}
          </Bars>
        </FutureCard>
      </Sheet>

      <Footer>
        <ActionRow>
          <ActionButton>
            <svg width="66" height="62" viewBox="0 0 66 62" fill="none" stroke="#000" strokeWidth="6" strokeLinecap="round" strokeLinejoin="round">
              <path d="M56 40A26 26 0 1 1 57 23" />
              <path d="M31 14V32L39 41" />
              <path d="M52 25H63L58 33Z" fill="#000" strokeWidth="4" />
            </svg>
            未来用时
          </ActionButton>
          <ActionButton>
            <svg width="60" height="62" viewBox="0 0 60 62" fill="none" stroke="#000" strokeWidth="6" strokeLinecap="round">
              <circle cx="28" cy="28" r="24" /><path d="M46 46L56 57" />
            </svg>
            顺路搜
          </ActionButton>
          <ActionButton>
            <svg width="50" height="62" viewBox="0 0 50 62" fill="#000">
              <circle cx="5" cy="30" r="5" /><circle cx="25" cy="30" r="5" /><circle cx="45" cy="30" r="5" />
            </svg>
            更多
          </ActionButton>
          <StartButton>开始导航</StartButton>
        </ActionRow>
        <SystemNav>
          <SystemButton aria-label="返回键">
            <svg width="46" height="50" viewBox="0 0 46 50" fill="none" stroke="#b3b3b3" strokeWidth="4" strokeLinejoin="round">
              <path d="M42 3V47L4 25Z" />
            </svg>
          </SystemButton>
          <SystemButton aria-label="主屏幕">
            <svg width="50" height="50" viewBox="0 0 50 50" fill="none" stroke="#b3b3b3" strokeWidth="4">
              <circle cx="25" cy="25" r="23" />
            </svg>
          </SystemButton>
          <SystemButton aria-label="最近任务">
            <svg width="46" height="46" viewBox="0 0 46 46" fill="none" stroke="#b3b3b3" strokeWidth="4">
              <rect x="2" y="2" width="42" height="42" rx="2" />
            </svg>
          </SystemButton>
        </SystemNav>
      </Footer>
    </Page>
  );
}
